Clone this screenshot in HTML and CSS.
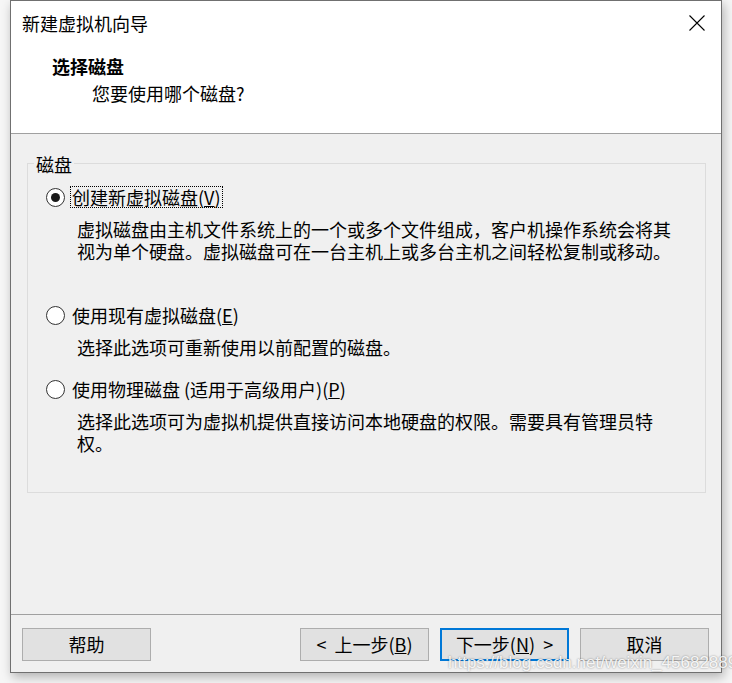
FILE: index.html
```html
<!DOCTYPE html>
<html lang="zh-CN">
<head>
<meta charset="utf-8">
<title>新建虚拟机向导</title>
<link rel="stylesheet" href="styles.css">
</head>
<body>
<div class="window">
  <div class="header">
    <div class="titlebar">
      <span class="title">新建虚拟机向导</span>
      <svg class="close" width="16" height="16" viewBox="0 0 16 16"><path d="M0.5 0.5 L15.5 15.5 M15.5 0.5 L0.5 15.5" stroke="#000" stroke-width="1.1" fill="none"/></svg>
    </div>
    <div class="heading">选择磁盘</div>
    <div class="subheading">您要使用哪个磁盘?</div>
  </div>
  <div class="content">
    <div class="group">
      <div class="legend">磁盘</div>
      <div class="option first">
        <span class="radio checked"></span>
        <span class="label focus">创建新虚拟磁盘(<u>V</u>)</span>
      </div>
      <div class="desc three">虚拟磁盘由主机文件系统上的一个或多个文件组成，客户机操作系统会将其<br>视为单个硬盘。虚拟磁盘可在一台主机上或多台主机之间轻松复制或移动。</div>
      <div class="option">
        <span class="radio"></span>
        <span class="label">使用现有虚拟磁盘(<u>E</u>)</span>
      </div>
      <div class="desc">选择此选项可重新使用以前配置的磁盘。</div>
      <div class="option">
        <span class="radio"></span>
        <span class="label">使用物理磁盘 (适用于高级用户)(<u>P</u>)</span>
      </div>
      <div class="desc">选择此选项可为虚拟机提供直接访问本地硬盘的权限。需要具有管理员特<br>权。</div>
    </div>
  </div>
  <div class="footer">
    <button class="btn">帮助</button>
    <div class="spacer"></div>
    <button class="btn">&lt;&nbsp; 上一步(<u>B</u>)</button>
    <button class="btn default">下一步(<u>N</u>)&nbsp; &gt;</button>
    <button class="btn">取消</button>
  </div>
  <div class="watermark">https://blog.csdn.net/weixin_45682889</div>
</div>
</body>
</html>
```

FILE: styles.css
```css
html, body {
  margin: 0;
  padding: 0;
}
body {
  width: 732px;
  height: 683px;
  background: #f6f6f6;
  font-family: "Noto Sans CJK SC", "Noto Sans", sans-serif;
  font-size: 18px;
  color: #000;
  overflow: hidden;
}
.window {
  position: relative;
  box-sizing: border-box;
  margin-left: 10px;
  width: 712px;
  height: 673px;
  border: 1px solid #707070;
  background: #f0f0f0;
  display: flex;
  flex-direction: column;
  box-shadow: 2px 4px 10px rgba(0, 0, 0, 0.28);
}
.header {
  height: 132px;
  background: #fff;
  border-bottom: 1px solid #a0a0a0;
  flex: none;
}
.titlebar {
  height: 43px;
  display: flex;
  align-items: center;
  justify-content: space-between;
  padding: 0 16px 0 11px;
}
.title {
  font-size: 18px;
  line-height: 22px;
}
.close {
  display: block;
}
.heading {
  margin-top: 11px;
  padding-left: 41px;
  font-weight: 700;
  line-height: 22px;
}
.subheading {
  margin-top: 5px;
  padding-left: 81px;
  line-height: 22px;
}
.content {
  flex: 1;
  padding: 29px 15px 0 16px;
}
.group {
  box-sizing: border-box;
  height: 330px;
  border: 1px solid #dcdcdc;
}
.legend {
  width: fit-content;
  margin: -11px 0 0 6px;
  padding: 0 2px;
  background: #f0f0f0;
  line-height: 22px;
}
.option {
  display: flex;
  align-items: center;
  padding-left: 18px;
  margin-top: 20px;
  height: 22px;
}
.option.first {
  margin-top: 11px;
}
.radio {
  box-sizing: border-box;
  width: 19px;
  height: 19px;
  border: 1.5px solid #333;
  border-radius: 50%;
  background: #fff;
  display: flex;
  align-items: center;
  justify-content: center;
  margin-right: 5px;
  flex: none;
}
.radio.checked::after {
  content: "";
  width: 9px;
  height: 9px;
  border-radius: 50%;
  background: #1a1a1a;
}
.label {
  border: 1px dotted transparent;
  padding: 0 1px;
  line-height: 20px;
  white-space: nowrap;
}
.label.focus {
  border-color: #000;
}
.desc {
  margin-top: 10px;
  padding-left: 49px;
  line-height: 22px;
  white-space: nowrap;
}
.desc.three {
  height: 66px;
}
.footer {
  flex: none;
  height: 58px;
  box-sizing: border-box;
  border-top: 1px solid #a0a0a0;
  display: flex;
  align-items: flex-start;
  gap: 11px;
  padding: 13px 12px 0 11px;
}
.spacer {
  flex: 1;
}
.btn {
  box-sizing: border-box;
  width: 129px;
  height: 33px;
  border: 1px solid #adadad;
  background: #e1e1e1;
  font-family: "Noto Sans CJK SC", "Noto Sans", sans-serif;
  font-size: 18px;
  line-height: 22px;
  color: #000;
  padding: 0 0 2px;
  margin: 0;
}
.btn.default {
  border: 2px solid #0078d7;
}
.watermark {
  position: absolute;
  left: 437px;
  top: 653px;
  font-family: "Liberation Sans", Arial, sans-serif;
  font-size: 17px;
  line-height: 17px;
  color: rgba(255, 255, 255, 0.9);
  text-shadow: 0 0 2px rgba(0, 0, 0, 0.45);
  white-space: nowrap;
}
```
